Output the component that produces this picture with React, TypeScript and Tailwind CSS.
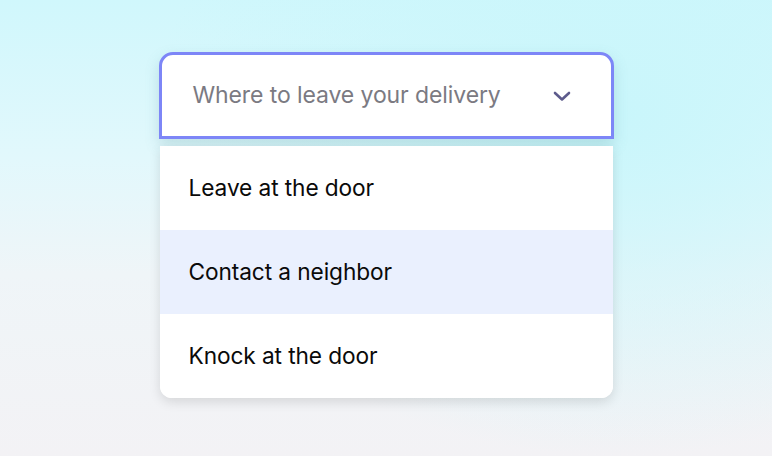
const options = ["Leave at the door", "Contact a neighbor", "Knock at the door"];

export default function App() {
  const selected = 1;
  return (
    <div
      className="w-[772px] h-[456px] overflow-hidden flex justify-center bg-[radial-gradient(ellipse_60%_75%_at_80%_25%,#c9f6fb_0%,rgba(205,246,252,0)_100%),linear-gradient(180deg,#d0f7fc_0%,#e2f8fc_35%,#eff5f8_60%,#f3f2f5_100%)]"
      style={{ fontFamily: "Inter, 'Noto Sans', sans-serif" }}
    >
      <div className="w-[455px] mt-[52px]">
        <div className="h-[87px] bg-white border-[3px] border-[#7d86f7] rounded-t-[14px] flex items-center pl-[31px] pr-[40px] shadow-[0_6px_14px_rgba(90,150,160,0.25)]">
          <span className="flex-1 text-[23px] text-[#7b7a82] tracking-[-0.1px]">Where to leave your delivery</span>
          <svg width="18" height="12" viewBox="0 0 18 12" fill="none">
            <path d="M2 3 L9 9.5 L16 3" stroke="#5d5b8c" strokeWidth="2.6" strokeLinecap="round" strokeLinejoin="round" />
          </svg>
        </div>
        <div className="mt-[7px] mx-[1px] bg-white rounded-b-[12px] overflow-hidden shadow-[0_4px_12px_rgba(0,0,0,0.12)]">
          {options.map((o, i) => (
            <div
              key={o}
              className={
                "h-[84px] flex items-center pl-[29px] text-[22.7px] text-[#0a0a0a] tracking-[-0.1px] " +
                (i === selected ? "bg-[#eaf0fe]" : "bg-white")
              }
            >
              {o}
            </div>
          ))}
        </div>
      </div>
    </div>
  );
}
